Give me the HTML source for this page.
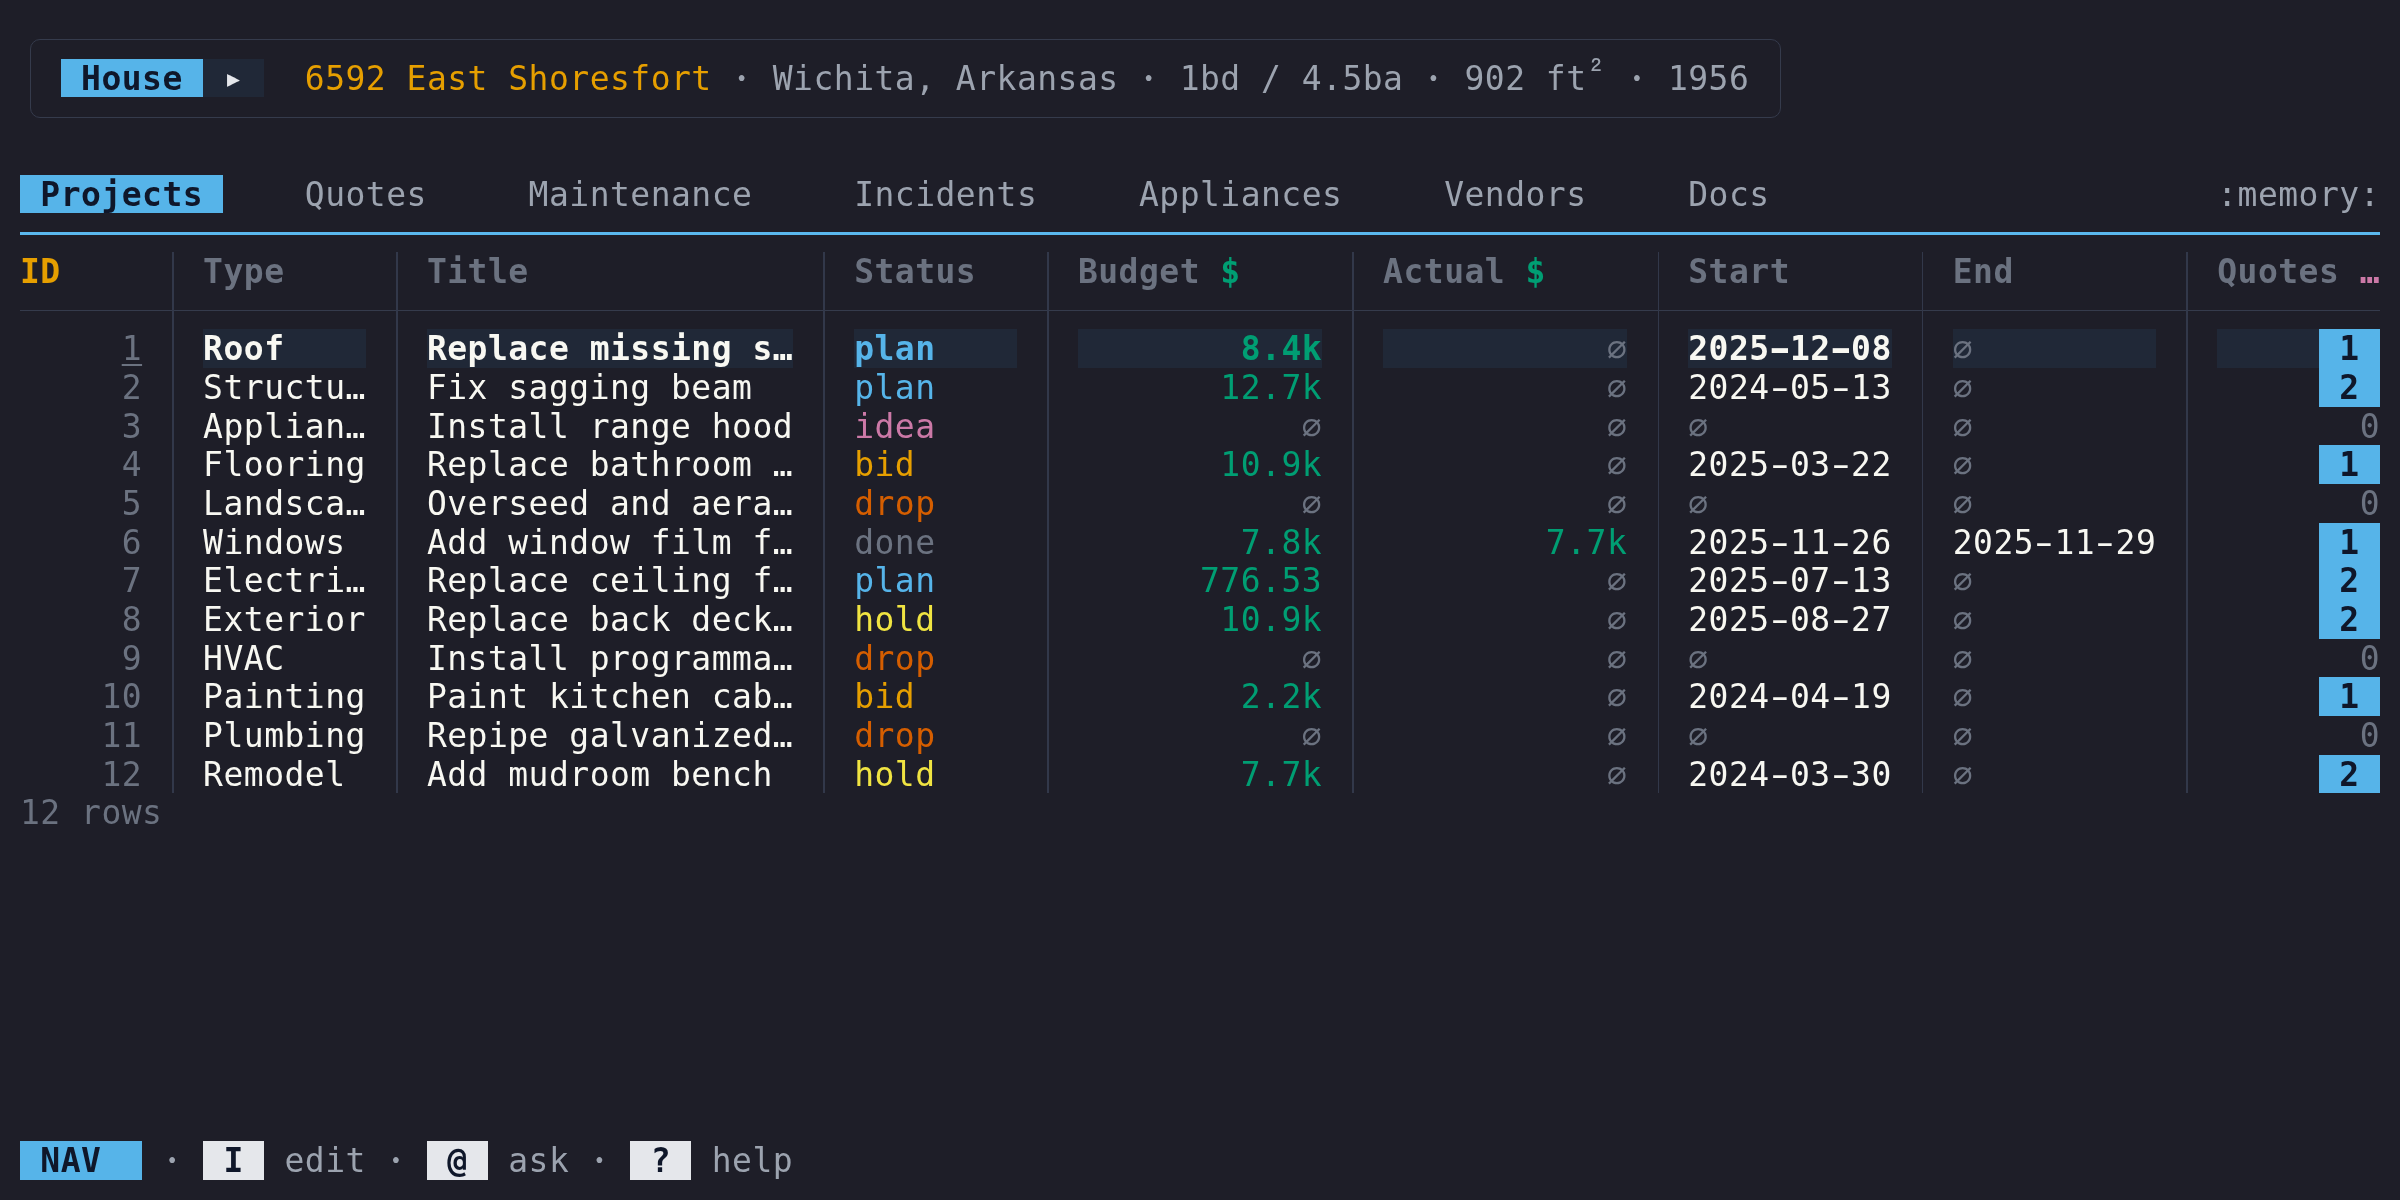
<!DOCTYPE html>
<html lang="en"><head><meta charset="utf-8"><title>micasa — Projects</title>
<style>
html,body{margin:0;padding:0;background:#1e1e28}
#t{position:relative;width:2400px;height:1200px;overflow:hidden;will-change:transform;color:#f8f8f2;
font-family:"DejaVu Sans Mono","Liberation Mono",monospace;font-size:33px;letter-spacing:0.4772px;line-height:40.6667px;white-space:pre;
--W:20.34483px;--H:38.66667px;font-variant-ligatures:none;font-kerning:none}
#t span,#t i{position:absolute;left:calc(20px + var(--c)*var(--W));top:calc(20px + var(--r)*var(--H));height:var(--H);font-style:normal}
#t span[style*="--w"],#t i{width:calc(var(--w)*var(--W))}
#t i{height:calc(var(--h)*var(--H))}
.b{font-weight:bold}
#t .date b{display:inline-block;font-weight:inherit;transform:scaleX(1.6)}
.u{text-decoration:underline;text-decoration-thickness:1.5px;text-underline-offset:3.5px}
.wh{color:#f8f8f2}
.mid{color:#9ca3af}
.dim{color:#6b7280}
.or{color:#e69f00}
.bl{color:#56b4e9}
.gr{color:#009e73}
.pk{color:#cc79a7}
.vm{color:#d55e00}
.yl{color:#f0e442}
.pill{background:#56b4e9;color:#0f172a}
.chip{background:#202837;color:#e5e7eb;line-height:var(--H)}
.key{background:#e5e7eb;color:#0f172a}
#t i.sel{background:#202837}
#t span.dot{color:#9ca3af;width:var(--W);text-align:center;letter-spacing:0;font-family:"DejaVu Serif",serif;font-weight:bold;font-size:31px;transform:translate(-.5px,-1px)}
#t span.sup{color:#9ca3af;width:var(--W);text-align:center;letter-spacing:0;font-family:"IPAGothic","DejaVu Sans Mono",monospace;font-size:38px;transform:translate(2px,-3px)}
.hb{position:absolute;box-sizing:border-box;left:30px;top:39.35px;width:1751.15px;height:78.45px;border:1.3px solid #353b4c;border-radius:10px}
.ul{position:absolute;left:20px;width:2360px;top:231.5px;height:3.5px;background:#5ab8ee}
.hl{position:absolute;left:20px;width:2360px;top:309.85px;height:1.3px;background:#353b4c}
#t i.vl{top:252px;height:541.3px;width:1.5px;left:calc(20px + (var(--c) + .5)*var(--W) - .25px);background:#32384a}
</style></head>
<body><div id="t">
<div class="hb"></div>
<span class="pill b" style="--r:1;--c:2;--w:7"> House </span>
<span class="chip" style="--r:1;--c:9;--w:3"> ▸ </span>
<span class="or" style="--r:1;--c:14">6592 East Shoresfort</span>
<span class="dot" style="--r:1;--c:35">·</span>
<span class="mid" style="--r:1;--c:37">Wichita, Arkansas</span>
<span class="dot" style="--r:1;--c:55">·</span>
<span class="mid" style="--r:1;--c:57">1bd / 4.5ba</span>
<span class="dot" style="--r:1;--c:69">·</span>
<span class="mid" style="--r:1;--c:71">902 ft</span>
<span class="sup" style="--r:1;--c:77">²</span>
<span class="dot" style="--r:1;--c:79">·</span>
<span class="mid" style="--r:1;--c:81">1956</span>
<span class="pill b" style="--r:4;--c:0;--w:10"> Projects </span>
<span class="mid" style="--r:4;--c:14">Quotes</span>
<span class="mid" style="--r:4;--c:25">Maintenance</span>
<span class="mid" style="--r:4;--c:41">Incidents</span>
<span class="mid" style="--r:4;--c:55">Appliances</span>
<span class="mid" style="--r:4;--c:70">Vendors</span>
<span class="mid" style="--r:4;--c:82">Docs</span>
<span class="mid" style="--r:4;--c:108">:memory:</span>
<div class="ul"></div>
<span class="or b" style="--r:6;--c:0">ID</span>
<span class="dim b" style="--r:6;--c:9">Type</span>
<span class="dim b" style="--r:6;--c:20">Title</span>
<span class="dim b" style="--r:6;--c:41">Status</span>
<span class="dim b" style="--r:6;--c:52">Budget </span>
<span class="dim b" style="--r:6;--c:67">Actual </span>
<span class="dim b" style="--r:6;--c:82">Start</span>
<span class="dim b" style="--r:6;--c:95">End</span>
<span class="dim b" style="--r:6;--c:108">Quotes </span>
<span class="gr b" style="--r:6;--c:59">$</span>
<span class="gr b" style="--r:6;--c:74">$</span>
<span class="pk b" style="--r:6;--c:115">…</span>
<div class="hl"></div>
<i class="vl" style="--c:7"></i>
<i class="vl" style="--c:18"></i>
<i class="vl" style="--c:39"></i>
<i class="vl" style="--c:50"></i>
<i class="vl" style="--c:65"></i>
<i class="vl" style="--c:80"></i>
<i class="vl" style="--c:93"></i>
<i class="vl" style="--c:106"></i>
<i class="sel" style="--r:8;--c:9;--w:8;--h:1"></i>
<i class="sel" style="--r:8;--c:20;--w:18;--h:1"></i>
<i class="sel" style="--r:8;--c:41;--w:8;--h:1"></i>
<i class="sel" style="--r:8;--c:52;--w:12;--h:1"></i>
<i class="sel" style="--r:8;--c:67;--w:12;--h:1"></i>
<i class="sel" style="--r:8;--c:82;--w:10;--h:1"></i>
<i class="sel" style="--r:8;--c:95;--w:10;--h:1"></i>
<i class="sel" style="--r:8;--c:108;--w:5;--h:1"></i>
<span class="dim u" style="--r:8;--c:5">1</span>
<span class="wh b" style="--r:8;--c:9">Roof</span>
<span class="wh b" style="--r:8;--c:20">Replace missing s…</span>
<span class="bl b" style="--r:8;--c:41">plan</span>
<span class="gr b" style="--r:8;--c:60">8.4k</span>
<span class="dim" style="--r:8;--c:78">∅</span>
<span class="date b" style="--r:8;--c:82">2025<b>-</b>12<b>-</b>08</span>
<span class="dim" style="--r:8;--c:95">∅</span>
<span class="pill b" style="--r:8;--c:113;--w:3"> 1 </span>
<span class="dim" style="--r:9;--c:5">2</span>
<span class="" style="--r:9;--c:9">Structu…</span>
<span class="" style="--r:9;--c:20">Fix sagging beam</span>
<span class="bl" style="--r:9;--c:41">plan</span>
<span class="gr" style="--r:9;--c:59">12.7k</span>
<span class="dim" style="--r:9;--c:78">∅</span>
<span class="date" style="--r:9;--c:82">2024<b>-</b>05<b>-</b>13</span>
<span class="dim" style="--r:9;--c:95">∅</span>
<span class="pill b" style="--r:9;--c:113;--w:3"> 2 </span>
<span class="dim" style="--r:10;--c:5">3</span>
<span class="" style="--r:10;--c:9">Applian…</span>
<span class="" style="--r:10;--c:20">Install range hood</span>
<span class="pk" style="--r:10;--c:41">idea</span>
<span class="dim" style="--r:10;--c:63">∅</span>
<span class="dim" style="--r:10;--c:78">∅</span>
<span class="dim" style="--r:10;--c:82">∅</span>
<span class="dim" style="--r:10;--c:95">∅</span>
<span class="dim" style="--r:10;--c:115">0</span>
<span class="dim" style="--r:11;--c:5">4</span>
<span class="" style="--r:11;--c:9">Flooring</span>
<span class="" style="--r:11;--c:20">Replace bathroom …</span>
<span class="or" style="--r:11;--c:41">bid</span>
<span class="gr" style="--r:11;--c:59">10.9k</span>
<span class="dim" style="--r:11;--c:78">∅</span>
<span class="date" style="--r:11;--c:82">2025<b>-</b>03<b>-</b>22</span>
<span class="dim" style="--r:11;--c:95">∅</span>
<span class="pill b" style="--r:11;--c:113;--w:3"> 1 </span>
<span class="dim" style="--r:12;--c:5">5</span>
<span class="" style="--r:12;--c:9">Landsca…</span>
<span class="" style="--r:12;--c:20">Overseed and aera…</span>
<span class="vm" style="--r:12;--c:41">drop</span>
<span class="dim" style="--r:12;--c:63">∅</span>
<span class="dim" style="--r:12;--c:78">∅</span>
<span class="dim" style="--r:12;--c:82">∅</span>
<span class="dim" style="--r:12;--c:95">∅</span>
<span class="dim" style="--r:12;--c:115">0</span>
<span class="dim" style="--r:13;--c:5">6</span>
<span class="" style="--r:13;--c:9">Windows</span>
<span class="" style="--r:13;--c:20">Add window film f…</span>
<span class="dim" style="--r:13;--c:41">done</span>
<span class="gr" style="--r:13;--c:60">7.8k</span>
<span class="gr" style="--r:13;--c:75">7.7k</span>
<span class="date" style="--r:13;--c:82">2025<b>-</b>11<b>-</b>26</span>
<span class="date" style="--r:13;--c:95">2025<b>-</b>11<b>-</b>29</span>
<span class="pill b" style="--r:13;--c:113;--w:3"> 1 </span>
<span class="dim" style="--r:14;--c:5">7</span>
<span class="" style="--r:14;--c:9">Electri…</span>
<span class="" style="--r:14;--c:20">Replace ceiling f…</span>
<span class="bl" style="--r:14;--c:41">plan</span>
<span class="gr" style="--r:14;--c:58">776.53</span>
<span class="dim" style="--r:14;--c:78">∅</span>
<span class="date" style="--r:14;--c:82">2025<b>-</b>07<b>-</b>13</span>
<span class="dim" style="--r:14;--c:95">∅</span>
<span class="pill b" style="--r:14;--c:113;--w:3"> 2 </span>
<span class="dim" style="--r:15;--c:5">8</span>
<span class="" style="--r:15;--c:9">Exterior</span>
<span class="" style="--r:15;--c:20">Replace back deck…</span>
<span class="yl" style="--r:15;--c:41">hold</span>
<span class="gr" style="--r:15;--c:59">10.9k</span>
<span class="dim" style="--r:15;--c:78">∅</span>
<span class="date" style="--r:15;--c:82">2025<b>-</b>08<b>-</b>27</span>
<span class="dim" style="--r:15;--c:95">∅</span>
<span class="pill b" style="--r:15;--c:113;--w:3"> 2 </span>
<span class="dim" style="--r:16;--c:5">9</span>
<span class="" style="--r:16;--c:9">HVAC</span>
<span class="" style="--r:16;--c:20">Install programma…</span>
<span class="vm" style="--r:16;--c:41">drop</span>
<span class="dim" style="--r:16;--c:63">∅</span>
<span class="dim" style="--r:16;--c:78">∅</span>
<span class="dim" style="--r:16;--c:82">∅</span>
<span class="dim" style="--r:16;--c:95">∅</span>
<span class="dim" style="--r:16;--c:115">0</span>
<span class="dim" style="--r:17;--c:4">10</span>
<span class="" style="--r:17;--c:9">Painting</span>
<span class="" style="--r:17;--c:20">Paint kitchen cab…</span>
<span class="or" style="--r:17;--c:41">bid</span>
<span class="gr" style="--r:17;--c:60">2.2k</span>
<span class="dim" style="--r:17;--c:78">∅</span>
<span class="date" style="--r:17;--c:82">2024<b>-</b>04<b>-</b>19</span>
<span class="dim" style="--r:17;--c:95">∅</span>
<span class="pill b" style="--r:17;--c:113;--w:3"> 1 </span>
<span class="dim" style="--r:18;--c:4">11</span>
<span class="" style="--r:18;--c:9">Plumbing</span>
<span class="" style="--r:18;--c:20">Repipe galvanized…</span>
<span class="vm" style="--r:18;--c:41">drop</span>
<span class="dim" style="--r:18;--c:63">∅</span>
<span class="dim" style="--r:18;--c:78">∅</span>
<span class="dim" style="--r:18;--c:82">∅</span>
<span class="dim" style="--r:18;--c:95">∅</span>
<span class="dim" style="--r:18;--c:115">0</span>
<span class="dim" style="--r:19;--c:4">12</span>
<span class="" style="--r:19;--c:9">Remodel</span>
<span class="" style="--r:19;--c:20">Add mudroom bench</span>
<span class="yl" style="--r:19;--c:41">hold</span>
<span class="gr" style="--r:19;--c:60">7.7k</span>
<span class="dim" style="--r:19;--c:78">∅</span>
<span class="date" style="--r:19;--c:82">2024<b>-</b>03<b>-</b>30</span>
<span class="dim" style="--r:19;--c:95">∅</span>
<span class="pill b" style="--r:19;--c:113;--w:3"> 2 </span>
<span class="dim" style="--r:20;--c:0">12 rows</span>
<span class="pill b" style="--r:29;--c:0;--w:6"> NAV  </span>
<span class="dot" style="--r:29;--c:7">·</span>
<span class="key b" style="--r:29;--c:9;--w:3"> I </span>
<span class="mid" style="--r:29;--c:13">edit</span>
<span class="dot" style="--r:29;--c:18">·</span>
<span class="key b" style="--r:29;--c:20;--w:3"> @ </span>
<span class="mid" style="--r:29;--c:24">ask</span>
<span class="dot" style="--r:29;--c:28">·</span>
<span class="key b" style="--r:29;--c:30;--w:3"> ? </span>
<span class="mid" style="--r:29;--c:34">help</span>
</div></body></html>
